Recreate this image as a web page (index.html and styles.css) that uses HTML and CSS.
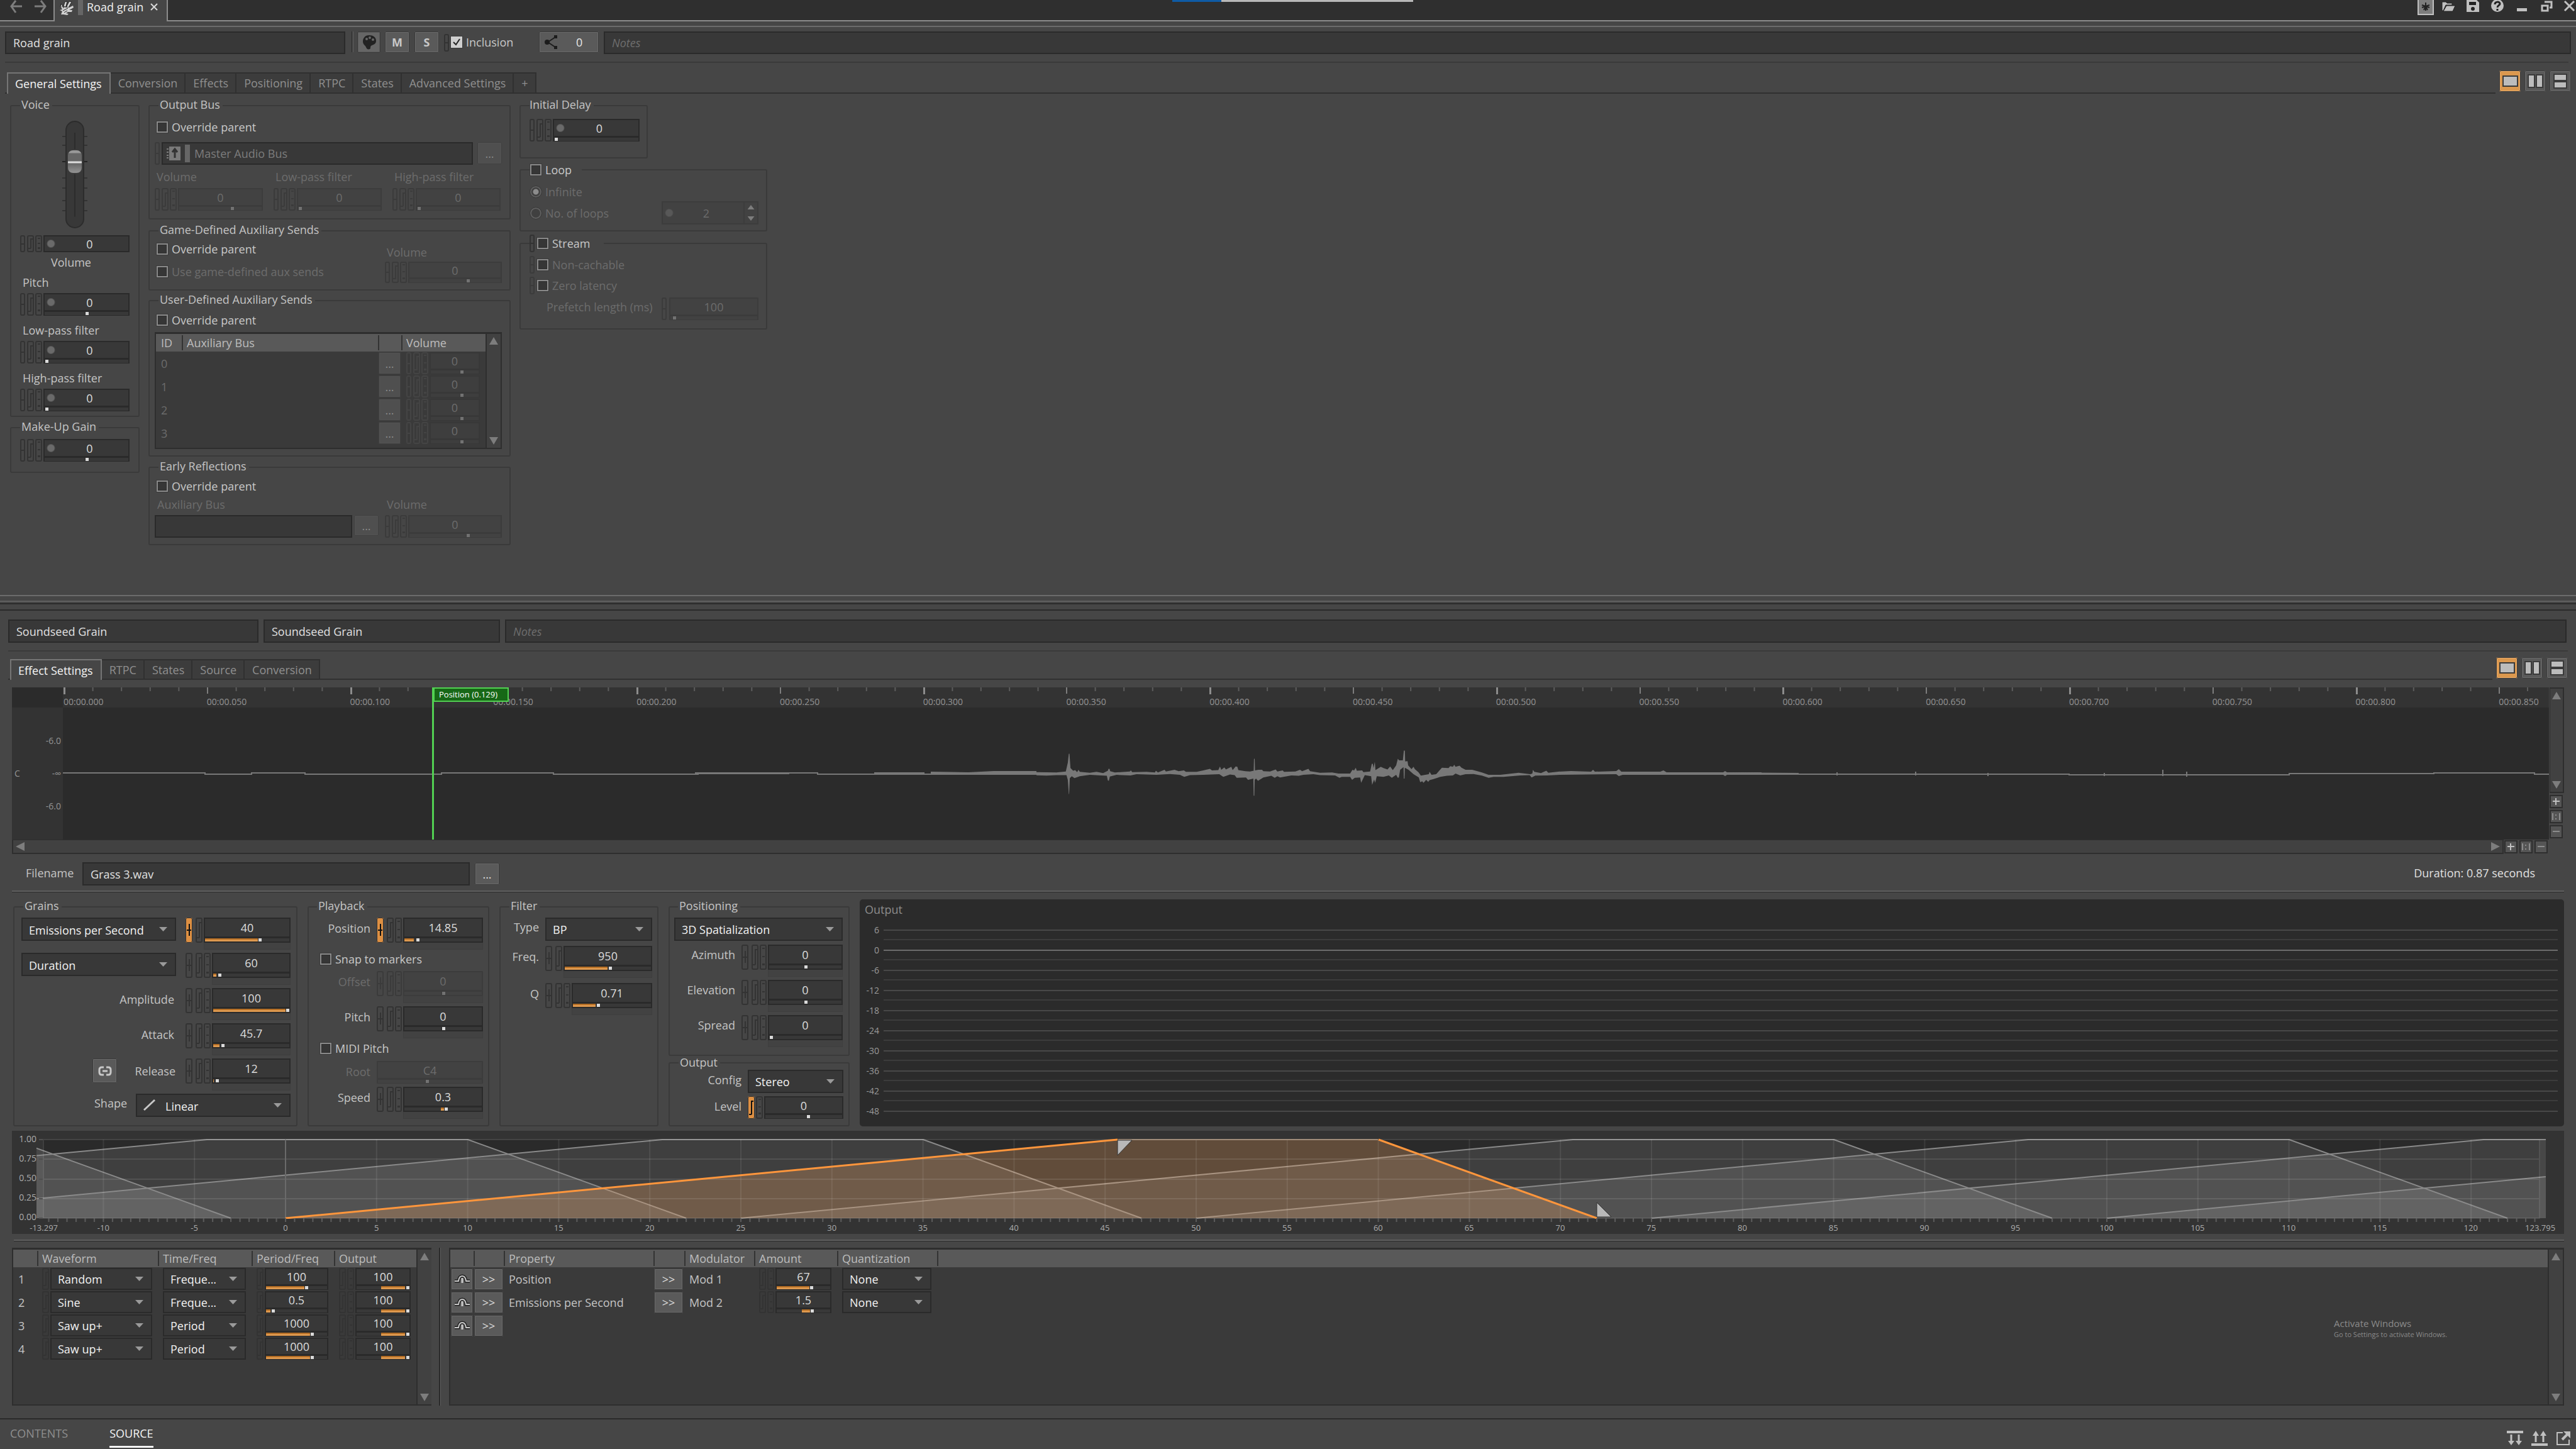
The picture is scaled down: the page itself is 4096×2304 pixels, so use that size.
FILE: index.html
```html
<!DOCTYPE html>
<html lang="en">
<head>
<meta charset="utf-8">
<title>Road grain</title>
<link rel="stylesheet" href="styles.css">
</head>
<body>
<header class="topbar">
  <nav class="history">
    <button aria-label="Back"><svg width="20" height="22" viewBox="0 0 20 22"><path d="M19 10H3M9 1L2 10l7 10" fill="none" stroke="#7d7d7d" stroke-width="3"/></svg></button>
    <button aria-label="Forward"><svg width="20" height="22" viewBox="0 0 20 22"><path d="M1 10h16M11 1l7 9-7 10" fill="none" stroke="#7d7d7d" stroke-width="3"/></svg></button>
  </nav>
  <div class="doctab">
    <svg width="26" height="24" viewBox="0 0 26 24"><path d="M3 11l1-5 3 4M8 10l2-7 4-1-2 8M13 10l4-8 4 1-5 9" fill="#d2d2d2" stroke="#222" stroke-width="1"/><path d="M4 11l13 1 6-3 1 3-7 4 5 0-1 3-6 0-3 2 4 1-2 2-6-1-4 0 2-5-4-2 4-1z" fill="#d2d2d2"/><path d="M7 17l8-4M9 20l5-3M8 10v3M13 9l-1 3" stroke="#222" stroke-width="1" fill="none"/></svg>
    <span class="colorbar"></span>
    <span class="doctitle">Road grain</span>
    <button class="tabclose" aria-label="Close tab"><svg width="14" height="14" viewBox="0 0 14 14"><path d="M2 2l10 10M12 2L2 12" stroke="#d8d8d8" stroke-width="2"/></svg></button>
  </div>
  <div class="grip"></div>
  <div class="wintools">
    <button class="star" aria-label="Unsaved changes"><svg width="22" height="22" viewBox="0 0 22 22"><path d="M11 4v13M5 8l12 4M17 8L5 12M8 16l3-6 3 6" fill="none" stroke="#222" stroke-width="2"/></svg></button>
    <button aria-label="Open"><svg width="24" height="20" viewBox="0 0 24 20"><path d="M2 17V3h6l2 2h8v3H8l-4 9zM4 18l5-9h14l-4 9z" fill="#c0c0c0" stroke="#222" stroke-width="1"/></svg></button>
    <button aria-label="Save"><svg width="24" height="20" viewBox="0 0 24 20"><path d="M2 0h16l4 4v15H2z" fill="#c0c0c0"/><path d="M6 3h11v5H6z" fill="#222"/><circle cx="12" cy="14" r="3" fill="#222"/></svg></button>
    <button aria-label="Help"><svg width="24" height="20" viewBox="0 0 24 20"><circle cx="12" cy="9" r="10" fill="#c0c0c0"/><path d="M8 7c0-5 8-5 8-1 0 3-4 2-4 6M12 14v3" fill="none" stroke="#222" stroke-width="3"/></svg></button>
    <button aria-label="Minimize"><svg width="24" height="20" viewBox="0 0 24 20"><path d="M4 13h16v5H4z" fill="#c0c0c0"/></svg></button>
    <button aria-label="Restore"><svg width="24" height="20" viewBox="0 0 24 20"><path d="M9 3h11v9h-3" fill="none" stroke="#c0c0c0" stroke-width="3"/><path d="M5 9h9v8H5z" fill="#222" stroke="#c0c0c0" stroke-width="3"/></svg></button>
    <button aria-label="Close"><svg width="20" height="20" viewBox="3 0 20 20"><path d="M5 2l15 15M20 2L5 17" stroke="#c0c0c0" stroke-width="3"/></svg></button>
  </div>
</header>

<section class="pane upper">
  <div class="headrow">
    <input class="field name" aria-label="Name" value="Road grain">
    <span class="vsplit"></span>
    <button class="btn flat" aria-label="Color"><svg width="24" height="26" viewBox="0 0 24 26"><path d="M12 2C5 2 2 7 2 12c0 5 4 6 5 9s3 4 6 3c2-1 0-3 2-5s8-2 8-8S18 2 12 2z" fill="#222"/><g fill="#666"><circle cx="8" cy="8" r="2"/><circle cx="13" cy="6" r="2"/><circle cx="18" cy="9" r="2"/></g></svg></button>
    <button class="btn ms">M</button>
    <button class="btn ms">S</button>
    <i class="mk lk short"></i>
    <label class="check incl"><input type="checkbox" checked>Inclusion</label>
    <button class="btn share"><svg width="22" height="22" viewBox="0 0 22 22"><circle cx="4" cy="11" r="4" fill="#1c1c1c"/><path d="M5 11L17 3M5 11l12 8" stroke="#1c1c1c" stroke-width="2"/><path d="M15 0h5v5h-5zM15 17h5v5h-5z" fill="#1c1c1c"/></svg><span>0</span></button>
    <input class="field notes" aria-label="Notes" placeholder="Notes">
  </div>
  <hr class="rule">
  <div class="tabbar">
    <nav class="tabs">
      <button class="on">General Settings</button><button>Conversion</button><button>Effects</button><button>Positioning</button><button>RTPC</button><button>States</button><button>Advanced Settings</button><button>+</button>
    </nav>
    <div class="views">
      <button class="on" aria-label="Single view"><span></span></button>
      <button class="v" aria-label="Split vertically"><span></span><span></span></button>
      <button class="h" aria-label="Split horizontally"><span></span><span></span></button>
    </div>
  </div>

  <div class="general">
    <div class="col voicecol">
      <fieldset class="voice"><legend>Voice</legend>
        <div class="fader"><div class="ftrack"><span></span></div><div class="thumb"></div></div>
        <div class="num flatnum"><i class="mk lk"></i><i class="mk rt"></i><i class="mk rn"></i><div class="box"><input class="ball" aria-label="Volume" value="0"></div></div>
        <span class="cap mid">Volume</span>
        <label class="cap" for="pitch">Pitch</label>
        <div class="num"><i class="mk lk"></i><i class="mk rt"></i><i class="mk rn"></i><div class="box"><input id="pitch" class="ball" value="0"><input type="range" aria-label="Pitch" value="50"></div></div>
        <label class="cap gap" for="lpf">Low-pass filter</label>
        <div class="num"><i class="mk lk"></i><i class="mk rt"></i><i class="mk rn"></i><div class="box"><input id="lpf" class="ball" value="0"><input type="range" aria-label="Low-pass filter" value="0"></div></div>
        <label class="cap gap" for="hpf">High-pass filter</label>
        <div class="num"><i class="mk lk"></i><i class="mk rt"></i><i class="mk rn"></i><div class="box"><input id="hpf" class="ball" value="0"><input type="range" aria-label="High-pass filter" value="0"></div></div>
      </fieldset>
      <fieldset class="voice makeup"><legend>Make-Up Gain</legend>
        <div class="num"><i class="mk lk"></i><i class="mk rt"></i><i class="mk rn"></i><div class="box"><input class="ball" aria-label="Make-Up Gain" value="0"><input type="range" aria-label="Make-Up Gain" value="50"></div></div>
      </fieldset>
    </div>

    <div class="col buscol">
      <fieldset class="bus"><legend>Output Bus</legend>
        <label class="check"><input type="checkbox">Override parent</label>
        <div class="busrow dis">
          <i class="mk lk"></i>
          <div class="field busfield"><svg width="22" height="26" viewBox="0 0 22 26"><path d="M0 6h3M0 11h3M0 16h3M0 20h3" stroke="#7a7a7a" stroke-width="2"/><path d="M4 2h18v22H4z" fill="#7a7a7a"/><path d="M13 20V8M9 11l4-5 4 5" fill="none" stroke="#333" stroke-width="3"/></svg><span class="colorbar"></span><span>Master Audio Bus</span></div>
          <button class="btn dots" disabled>...</button>
        </div>
        <div class="three dis">
          <div><label for="bv">Volume</label><div class="num"><i class="mk lk"></i><i class="mk rt"></i><i class="mk rn"></i><div class="box"><input id="bv" value="0"><input type="range" aria-label="Bus volume" value="65"></div></div></div>
          <div><label for="bl">Low-pass filter</label><div class="num"><i class="mk lk"></i><i class="mk rt"></i><i class="mk rn"></i><div class="box"><input id="bl" value="0"><input type="range" aria-label="Bus low-pass" value="0"></div></div></div>
          <div><label for="bh">High-pass filter</label><div class="num"><i class="mk lk"></i><i class="mk rt"></i><i class="mk rn"></i><div class="box"><input id="bh" value="0"><input type="range" aria-label="Bus high-pass" value="0"></div></div></div>
        </div>
      </fieldset>
      <fieldset class="bus game"><legend>Game-Defined Auxiliary Sends</legend>
        <div class="pair">
          <div class="stack"><label class="check"><input type="checkbox">Override parent</label><label class="check dim"><input type="checkbox">Use game-defined aux sends</label></div>
          <div class="side dis"><label for="gv">Volume</label><div class="num"><i class="mk lk"></i><i class="mk rt"></i><i class="mk rn"></i><div class="box"><input id="gv" value="0"><input type="range" aria-label="Aux send volume" value="65"></div></div></div>
        </div>
      </fieldset>
      <fieldset class="bus user"><legend>User-Defined Auxiliary Sends</legend>
        <label class="check"><input type="checkbox">Override parent</label>
        <div class="listbox">
          <table class="auxtable">
            <colgroup><col class="c-id"><col><col class="c-btn"><col class="c-vol"></colgroup>
            <thead><tr><th>ID</th><th>Auxiliary Bus</th><th></th><th>Volume</th></tr></thead>
            <tbody>
            <tr><td>0</td><td></td><td class="nb"><button class="btn dots" disabled>...</button></td><td><div class="num dis"><i class="mk lk"></i><i class="mk rt"></i><i class="mk rn"></i><div class="box"><input aria-label="Send 0" value="0"><input type="range" aria-label="Send 0" value="65"></div></div></td></tr>
            <tr><td>1</td><td></td><td class="nb"><button class="btn dots" disabled>...</button></td><td><div class="num dis"><i class="mk lk"></i><i class="mk rt"></i><i class="mk rn"></i><div class="box"><input aria-label="Send 1" value="0"><input type="range" aria-label="Send 1" value="65"></div></div></td></tr>
            <tr><td>2</td><td></td><td class="nb"><button class="btn dots" disabled>...</button></td><td><div class="num dis"><i class="mk lk"></i><i class="mk rt"></i><i class="mk rn"></i><div class="box"><input aria-label="Send 2" value="0"><input type="range" aria-label="Send 2" value="65"></div></div></td></tr>
            <tr><td>3</td><td></td><td class="nb"><button class="btn dots" disabled>...</button></td><td><div class="num dis"><i class="mk lk"></i><i class="mk rt"></i><i class="mk rn"></i><div class="box"><input aria-label="Send 3" value="0"><input type="range" aria-label="Send 3" value="65"></div></div></td></tr>
            </tbody>
          </table>
          <div class="vscroll"><span class="up"></span><span class="down"></span></div>
        </div>
      </fieldset>
      <fieldset class="bus early"><legend>Early Reflections</legend>
        <label class="check"><input type="checkbox">Override parent</label>
        <div class="pair dis">
          <div class="erbus"><label for="eb">Auxiliary Bus</label><div class="ebrow"><input id="eb" class="field"><button class="btn dots" disabled>...</button></div></div>
          <div class="side"><label for="ev">Volume</label><div class="num"><i class="mk lk"></i><i class="mk rt"></i><i class="mk rn"></i><div class="box"><input id="ev" value="0"><input type="range" aria-label="Reflection volume" value="65"></div></div></div>
        </div>
      </fieldset>
    </div>

    <div class="col delaycol">
      <fieldset class="delay"><legend>Initial Delay</legend>
        <div class="num"><i class="mk lk"></i><i class="mk rt"></i><i class="mk rn"></i><div class="box"><input class="ball" aria-label="Initial Delay" value="0"><input type="range" aria-label="Initial Delay" value="0"></div></div>
      </fieldset>
      <fieldset class="loop"><legend><label class="check"><input type="checkbox">Loop</label></legend>
        <label class="check dim"><input type="radio" name="loop" checked>Infinite</label>
        <div class="looprow"><label class="check dim"><input type="radio" name="loop">No. of loops</label>
          <div class="spin dis"><input class="ball" aria-label="Number of loops" value="2"><span class="arrows"><span class="up"></span><span class="down"></span></span></div></div>
      </fieldset>
      <fieldset class="stream"><legend><i class="mk lk short"></i><label class="check"><input type="checkbox">Stream</label></legend>
        <div class="srow"><i class="mk lk short dis"></i><label class="check dim"><input type="checkbox">Non-cachable</label></div>
        <div class="srow"><i class="mk lk short dis"></i><label class="check dim"><input type="checkbox">Zero latency</label></div>
        <div class="prefetch dis"><label for="pf">Prefetch length (ms)</label><div class="num"><i class="mk lk"></i><div class="box"><input id="pf" value="100"><input type="range" aria-label="Prefetch length" value="2"></div></div></div>
      </fieldset>
    </div>
  </div>
</section>

<div class="splitter"></div>

<section class="pane lower">
  <div class="headrow two">
    <input class="field n1" aria-label="Plug-in" value="Soundseed Grain">
    <input class="field n2" aria-label="Preset" value="Soundseed Grain">
    <input class="field notes" aria-label="Effect notes" placeholder="Notes">
  </div>
  <hr class="rule">
  <div class="tabbar">
    <nav class="tabs"><button class="on">Effect Settings</button><button>RTPC</button><button>States</button><button>Source</button><button>Conversion</button></nav>
    <div class="views">
      <button class="on" aria-label="Single view"><span></span></button>
      <button class="v" aria-label="Split vertically"><span></span><span></span></button>
      <button class="h" aria-label="Split horizontally"><span></span><span></span></button>
    </div>
  </div>

  <div class="effect">
    <div class="wave">
      <div class="wavemain">
        <div class="ruler">
          <div class="times"><span>00:00.000</span><span>00:00.050</span><span>00:00.100</span><span>00:00.150</span><span>00:00.200</span><span>00:00.250</span><span>00:00.300</span><span>00:00.350</span><span>00:00.400</span><span>00:00.450</span><span>00:00.500</span><span>00:00.550</span><span>00:00.600</span><span>00:00.650</span><span>00:00.700</span><span>00:00.750</span><span>00:00.800</span><span>00:00.850</span></div>
        </div>
        <div class="wavebody">
          <div class="levels"><b>C</b><div><span>-6.0</span><span>-∞</span><span>-6.0</span></div></div>
          <svg class="signal" viewBox="0 0 3953 210" preserveAspectRatio="none">
            <path d="M0 104H226V106H300V104H385V106H602V104H780V106H1010V104H1200V106H1548M2380 104H2700V106H3190V107H3540V105H3770V104H3930V106H3953" fill="none" stroke="#787878" stroke-width="2"/>
            <path d="M1005 103h150v3h-150zM1290 103h80v4h-80zM1380 102l60 1 40-2 68 0v6l-60 0-50-1-58 1zM2378 102L2398 101 2430 102 2433 99 2436 102 2470 101 2474 98 2478 102 2540 102 2545 100 2550 103 2640 103 2643 101 2646 103 2760 104V107L2646 107 2643 109 2640 107 2480 107 2474 109 2470 106 2378 107zM2820 103h2v5h-2zM2945 102h2v6h-2zM3060 104h2v5h-2zM3338 99h2v10h-2zM3245 104h2v5h-2zM3376 102h2v8h-2z" fill="#787878"/>
            <g transform="translate(1548 -37) scale(.5306 .2667)"><path fill="#787878" d="M0 524L60 526 88 520 94 468 97 414 99 414 102 500 110 516 116 512 122 524 126 510 130 522 160 528 180 522 200 530 214 516 216 504 219 504 221 518 235 526 280 520 283 514 287 524 330 522 355 526 358 516 364 526 384 510 388 520 414 510 426 518 442 514 448 522 480 522 500 514 520 504 526 514 545 512 550 490 554 510 563 496 568 508 584 492 588 512 597 490 602 492 605 512 626 518 640 520 651 516 652 444 654 444 655 514 665 510 676 510 680 518 700 520 717 508 722 520 738 514 742 522 776 520 790 510 796 518 815 504 820 518 850 528 886 526 905 532 940 532 947 510 952 514 957 498 960 516 976 514 980 524 1000 520 1005 474 1008 474 1010 500 1014 462 1016 512 1032 492 1040 500 1052 508 1060 490 1068 512 1078 484 1083 444 1087 454 1098 454 1101 396 1104 396 1105 460 1112 458 1114 484 1124 506 1130 492 1134 506 1145 525 1152 545 1176 536 1178 522 1184 540 1198 536 1215 498 1235 500 1240 488 1248 492 1252 480 1256 492 1268 486 1274 498 1286 510 1306 510 1335 526 1355 540 1390 540 1445 528 1480 536 1486 532 1488 510 1492 522 1512 530 1528 516 1534 528 1568 520V540L1530 544 1495 545 1484 556 1478 542 1450 544 1400 552 1370 552 1355 558 1335 545 1310 535 1286 536 1270 544 1256 532 1248 544 1230 546 1210 552 1190 565 1178 572 1174 582 1168 570 1160 588 1156 578 1150 584 1146 556 1130 536 1115 510 1104 498 1103 562 1101 562 1100 494 1090 510 1086 556 1083 558 1078 540 1065 558 1056 544 1040 552 1020 548 1015 588 1012 568 1006 600 1003 548 984 542 973 588 970 556 954 558 946 570 940 552 915 552 908 558 895 544 850 542 830 536 800 540 786 546 764 544 730 556 722 548 714 558 704 546 680 556 664 576 658 562 654 570 653 665 651 665 650 562 634 570 628 556 600 558 594 542 580 538 560 552 548 536 500 540 460 542 443 552 430 540 400 535 360 540 300 536 282 544 240 540 220 550 217 576 214 574 211 546 160 540 130 548 114 560 106 548 100 560 98 654 97 654 94 570 90 542 60 542 30 545 0 543z"/></g>
          </svg>
        </div>
        <div class="marker"><span>Position (0.129)</span></div>
        <div class="hrow">
          <div class="hscroll"><span class="left"></span><span class="right"></span></div>
          <button class="zb" aria-label="Zoom in"><svg viewBox="0 0 17 17"><path d="M3 8h11M8 3v11" stroke="#c0c0c0" stroke-width="2"/></svg></button><button class="zb" aria-label="Reset zoom"><svg viewBox="0 0 17 17"><path d="M3 3v11M14 3v11M8 5v2M8 11v2" stroke="#8c8c8c" stroke-width="2"/></svg></button><button class="zb" aria-label="Zoom out"><svg viewBox="0 0 17 17"><path d="M3 8h11" stroke="#8c8c8c" stroke-width="2"/></svg></button>
        </div>
      </div>
      <div class="wavecol">
        <div class="vscroll"><span class="up"></span><span class="down"></span></div>
        <button class="zb" aria-label="Zoom in vertically"><svg viewBox="0 0 17 17"><path d="M3 8h11M8 3v11" stroke="#c0c0c0" stroke-width="2"/></svg></button><button class="zb" aria-label="Reset vertical zoom"><svg viewBox="0 0 17 17"><path d="M3 3v11M14 3v11M8 5v2M8 11v2" stroke="#8c8c8c" stroke-width="2"/></svg></button><button class="zb" aria-label="Zoom out vertically"><svg viewBox="0 0 17 17"><path d="M3 8h11" stroke="#8c8c8c" stroke-width="2"/></svg></button>
      </div>
    </div>

    <div class="filerow"><label for="file">Filename</label><input id="file" class="field" value="Grass 3.wav"><button class="btn dots">...</button><span class="duration">Duration: 0.87 seconds</span></div>
    <hr class="groove">

    <div class="groups">
      <fieldset class="grains"><legend>Grains</legend>
        <div class="prow"><select aria-label="Emission mode"><option>Emissions per Second</option></select><div class="num big"><i class="mk lfo hot"></i><i class="mk rt"></i><div class="box"><input aria-label="Emissions" value="40"><input type="range" aria-label="Emissions" value="66" style="--b:63%"></div></div></div>
        <div class="prow"><select aria-label="Length mode"><option>Duration</option></select><div class="num big"><i class="mk lfo"></i><i class="mk rt"></i><i class="mk rn"></i><div class="box"><input aria-label="Duration" value="60"><input type="range" aria-label="Duration" value="6" style="--b:4%"></div></div></div>
        <div class="prow"><label for="amp">Amplitude</label><div class="num big"><i class="mk lfo"></i><i class="mk rt"></i><i class="mk rn"></i><div class="box"><input id="amp" value="100"><input type="range" aria-label="Amplitude" value="100" style="--b:95%"></div></div></div>
        <div class="prow"><label for="att">Attack</label><div class="num big"><i class="mk lfo"></i><i class="mk rt"></i><i class="mk rn"></i><div class="box"><input id="att" value="45.7"><input type="range" aria-label="Attack" value="10" style="--b:8%"></div></div></div>
        <div class="prow rel"><button class="btn linkbtn" aria-label="Link attack and release"><svg width="22" height="16" viewBox="0 0 22 16"><path d="M9 2H6Q2 2 2 6v4q0 4 4 4h3M13 2h3q4 0 4 4v4q0 4-4 4h-3M7 8h8" fill="none" stroke="#c8c8c8" stroke-width="3"/></svg></button><label for="rls">Release</label><div class="num big"><i class="mk lfo"></i><i class="mk rt"></i><i class="mk rn"></i><div class="box"><input id="rls" value="12"><input type="range" aria-label="Release" value="3" style="--b:1%"></div></div></div>
        <div class="prow shape"><label for="shp">Shape</label><span class="selwrap"><svg width="20" height="20" viewBox="0 0 20 20"><path d="M1 18L18 2" stroke="#c8c8c8" stroke-width="3"/></svg><select id="shp"><option>Linear</option></select></span></div>
      </fieldset>
      <fieldset class="playback"><legend>Playback</legend>
        <div class="prow"><label for="pos">Position</label><div class="num big"><i class="mk lfo hot"></i><i class="mk rt"></i><i class="mk rn"></i><div class="box"><input id="pos" value="14.85"><input type="range" aria-label="Position" value="15" style="--b:12%"></div></div></div>
        <label class="check"><input type="checkbox">Snap to markers</label>
        <div class="prow gap dis"><label for="off">Offset</label><div class="num big"><i class="mk lfo"></i><i class="mk rt"></i><i class="mk rn"></i><div class="box"><input id="off" value="0"><input type="range" aria-label="Offset" value="50"></div></div></div>
        <div class="prow"><label for="pp">Pitch</label><div class="num big"><i class="mk lfo"></i><i class="mk rt"></i><i class="mk rn"></i><div class="box"><input id="pp" value="0"><input type="range" aria-label="Pitch" value="50"></div></div></div>
        <label class="check"><input type="checkbox">MIDI Pitch</label>
        <div class="prow gap root dis"><label for="root">Root</label><div class="num"><div class="box"><input id="root" value="C4"><input type="range" aria-label="Root" value="47"></div></div></div>
        <div class="prow speed"><label for="spd">Speed</label><div class="num big"><i class="mk lfo"></i><i class="mk rt"></i><i class="mk rn"></i><div class="box"><input id="spd" value="0.3"><input type="range" aria-label="Speed" value="54" style="--a:47%;--b:52%"></div></div></div>
      </fieldset>
      <fieldset class="filter"><legend>Filter</legend>
        <div class="prow type"><label for="ft">Type</label><select id="ft"><option>BP</option></select></div>
        <div class="prow freq"><label for="fq">Freq.</label><div class="num big"><i class="mk lfo"></i><i class="mk rt"></i><div class="box"><input id="fq" value="950"><input type="range" aria-label="Frequency" value="53" style="--b:50%"></div></div></div>
        <div class="prow"><label for="q">Q</label><div class="num big"><i class="mk lfo"></i><i class="mk rt"></i><i class="mk rn"></i><div class="box"><input id="q" value="0.71"><input type="range" aria-label="Q" value="31" style="--b:29%"></div></div></div>
      </fieldset>
      <div class="col poscol">
        <fieldset class="position"><legend>Positioning</legend>
          <div class="prow spat"><select aria-label="Positioning"><option>3D Spatialization</option></select></div>
          <div class="prow"><label for="az">Azimuth</label><div class="num big"><i class="mk lfo"></i><i class="mk rt"></i><i class="mk rn"></i><div class="box"><input id="az" value="0"><input type="range" aria-label="Azimuth" value="50"></div></div></div>
          <div class="prow"><label for="el">Elevation</label><div class="num big"><i class="mk lfo"></i><i class="mk rt"></i><i class="mk rn"></i><div class="box"><input id="el" value="0"><input type="range" aria-label="Elevation" value="50"></div></div></div>
          <div class="prow"><label for="sp">Spread</label><div class="num big"><i class="mk lfo"></i><i class="mk rt"></i><i class="mk rn"></i><div class="box"><input id="sp" value="0"><input type="range" aria-label="Spread" value="0"></div></div></div>
        </fieldset>
        <fieldset class="output"><legend>Output</legend>
          <div class="prow config"><label for="cfg">Config</label><select id="cfg"><option>Stereo</option></select></div>
          <div class="prow level"><label for="lvl">Level</label><div class="num"><i class="mk rt hot"></i><i class="mk rn"></i><div class="box"><input id="lvl" value="0"><input type="range" aria-label="Level" value="56"></div></div></div>
        </fieldset>
      </div>
      <div class="meter"><h2>Output</h2>
        <div class="mrow"><span>6</span></div><div class="mrow zero"><span>0</span></div><div class="mrow"><span>-6</span></div><div class="mrow"><span>-12</span></div><div class="mrow"><span>-18</span></div><div class="mrow"><span>-24</span></div><div class="mrow"><span>-30</span></div><div class="mrow"><span>-36</span></div><div class="mrow"><span>-42</span></div><div class="mrow last"><span>-48</span></div>
      </div>
    </div>

    <div class="graph">
      <div class="gy"><span>1.00</span><span>0.75</span><span>0.50</span><span>0.25</span><span>0.00</span></div>
      <svg viewBox="39 0 3990 146" preserveAspectRatio="none">
        <defs>
          <path id="grain" d="M0 139L1323 14H1738L2085 139z"/>
          <path id="edge" d="M0 139L1323 14H1738L2085 139"/>
          <clipPath id="plot"><path d="M39 12h3990v128H39z"/></clipPath>
          <pattern id="minor" width="14.48" height="7" patternUnits="userSpaceOnUse" x="434" y="139"><path d="M0 0h2v7H0z" fill="#5c5c5c"/></pattern>
          <pattern id="major" width="144.8" height="125" patternUnits="userSpaceOnUse" x="434" y="14"><path d="M0 0h2v125H0z" fill="#fff" fill-opacity=".08"/></pattern>
        </defs>
        <path d="M49 14H4020V139H49z" fill="#2a2a2a"/>
        <g clip-path="url(#plot)">
          <g fill="#fff" fill-opacity=".1"><use href="#grain" x="-1737"/><use href="#grain" x="-1013"/><use href="#grain" x="-289"/><use href="#grain" x="1159"/><use href="#grain" x="1883"/><use href="#grain" x="2607"/><use href="#grain" x="3331"/></g>
          <g fill="none" stroke="#8a8a8a" stroke-width="2"><use href="#edge" x="-1737"/><use href="#edge" x="-1013"/><use href="#edge" x="-289"/><use href="#edge" x="1159"/><use href="#edge" x="1883"/><use href="#edge" x="2607"/><use href="#edge" x="3331"/></g>
          <use href="#grain" x="435" fill="#ffae6a" fill-opacity=".26"/>
          <path d="M49 14H4020V139H49z" fill="url(#major)"/>
          <path d="M49 14H4020M49 45H4020M49 77H4020M49 108H4020M49 139H4020M50 14V139M4019 14V139" stroke="#fff" stroke-opacity=".1" stroke-width="2"/>
          <path d="M435 14V139" stroke="#6a6a6a" stroke-width="2"/>
          <path d="M1759 14H2172" stroke="#a08c7a" stroke-width="2"/>
          <path d="M435 139L1758 14M2173 14L2520 139" fill="none" stroke="#ff963c" stroke-width="3"/>
          <path d="M1758 15h23l-23 24zM2520 114v23h23z" fill="#b8b8b8" stroke="#333"/>
        </g>
        <path d="M49 139H4020v6H49z" fill="url(#minor)"/>
        <path d="M43 14h6M43 45h6M43 77h6M43 108h6M43 139h6" stroke="#505050" stroke-width="2"/>
      </svg>
      <div class="gx"><span class="first">-13.297</span><span>-10</span><span>-5</span><span>0</span><span>5</span><span>10</span><span>15</span><span>20</span><span>25</span><span>30</span><span>35</span><span>40</span><span>45</span><span>50</span><span>55</span><span>60</span><span>65</span><span>70</span><span>75</span><span>80</span><span>85</span><span>90</span><span>95</span><span>100</span><span>105</span><span>110</span><span>115</span><span>120</span><span class="lastx">123.795</span></div>
    </div>
    <hr class="groove">

    <div class="tables">
      <div class="listbox modbox">
        <table class="mods">
          <colgroup><col class="m1"><col class="m2"><col class="m3"><col class="m4"><col class="m5"></colgroup>
          <thead><tr><th></th><th>Waveform</th><th>Time/Freq</th><th>Period/Freq</th><th>Output</th></tr></thead>
          <tbody>
          <tr><td>1</td><td><div class="wf"><i class="mk rt"></i><select aria-label="Waveform 1"><option>Random</option></select></div></td><td><select aria-label="Time mode 1"><option>Freque...</option></select></td><td><div class="num"><i class="mk rt"></i><div class="box"><input aria-label="Period 1" value="100"><input type="range" aria-label="Period 1" value="67" style="--b:64%"></div></div></td><td><div class="num"><i class="mk rt"></i><i class="mk rn"></i><div class="box"><input aria-label="Output 1" value="100"><input type="range" aria-label="Output 1" value="100" style="--a:46%;--b:92%"></div></div></td></tr>
          <tr><td>2</td><td><div class="wf"><i class="mk rt"></i><select aria-label="Waveform 2"><option>Sine</option></select></div></td><td><select aria-label="Time mode 2"><option>Freque...</option></select></td><td><div class="num"><i class="mk rt"></i><div class="box"><input aria-label="Period 2" value="0.5"><input type="range" aria-label="Period 2" value="9" style="--b:7%"></div></div></td><td><div class="num"><i class="mk rt"></i><i class="mk rn"></i><div class="box"><input aria-label="Output 2" value="100"><input type="range" aria-label="Output 2" value="100" style="--a:46%;--b:92%"></div></div></td></tr>
          <tr><td>3</td><td><div class="wf"><i class="mk rt"></i><select aria-label="Waveform 3"><option>Saw up+</option></select></div></td><td><select aria-label="Time mode 3"><option>Period</option></select></td><td><div class="num"><i class="mk rt"></i><div class="box"><input aria-label="Period 3" value="1000"><input type="range" aria-label="Period 3" value="77" style="--b:73%"></div></div></td><td><div class="num"><i class="mk rt"></i><i class="mk rn"></i><div class="box"><input aria-label="Output 3" value="100"><input type="range" aria-label="Output 3" value="100" style="--a:46%;--b:92%"></div></div></td></tr>
          <tr><td>4</td><td><div class="wf"><i class="mk rt"></i><select aria-label="Waveform 4"><option>Saw up+</option></select></div></td><td><select aria-label="Time mode 4"><option>Period</option></select></td><td><div class="num"><i class="mk rt"></i><div class="box"><input aria-label="Period 4" value="1000"><input type="range" aria-label="Period 4" value="77" style="--b:73%"></div></div></td><td><div class="num"><i class="mk rt"></i><i class="mk rn"></i><div class="box"><input aria-label="Output 4" value="100"><input type="range" aria-label="Output 4" value="100" style="--a:46%;--b:92%"></div></div></td></tr>
          </tbody>
        </table>
        <div class="vscroll"><span class="up"></span><span class="down"></span></div>
      </div>
      <span class="vgroove"></span>
      <div class="listbox propbox">
        <table class="props">
          <colgroup><col class="p1"><col class="p2"><col class="p3"><col class="p4"><col class="p5"><col class="p6"><col class="p7"><col></colgroup>
          <thead><tr><th></th><th></th><th>Property</th><th></th><th>Modulator</th><th>Amount</th><th>Quantization</th><th></th></tr></thead>
          <tbody>
          <tr><td class="nb"><button class="btn curve" aria-label="Curve"><svg width="26" height="16" viewBox="0 0 26 16"><path d="M1 11h6q1-8 6-8t6 8h6" fill="none" stroke="#222" stroke-width="5"/><path d="M1 11h6q1-8 6-8t6 8h6" fill="none" stroke="#c8c8c8" stroke-width="2"/><path d="M13 6v8" stroke="#c8c8c8" stroke-width="3"/></svg></button></td><td class="nb"><button class="btn more">&gt;&gt;</button></td><td>Position</td><td class="nb"><button class="btn more">&gt;&gt;</button></td><td>Mod 1</td><td><div class="num"><i class="mk rt"></i><i class="mk rn"></i><div class="box"><input aria-label="Amount 1" value="67"><input type="range" aria-label="Amount 1" value="66" style="--b:62%"></div></div></td><td><select aria-label="Quantization 1"><option>None</option></select></td><td></td></tr>
          <tr><td class="nb"><button class="btn curve" aria-label="Curve"><svg width="26" height="16" viewBox="0 0 26 16"><path d="M1 11h6q1-8 6-8t6 8h6" fill="none" stroke="#222" stroke-width="5"/><path d="M1 11h6q1-8 6-8t6 8h6" fill="none" stroke="#c8c8c8" stroke-width="2"/><path d="M13 6v8" stroke="#c8c8c8" stroke-width="3"/></svg></button></td><td class="nb"><button class="btn more">&gt;&gt;</button></td><td>Emissions per Second</td><td class="nb"><button class="btn more">&gt;&gt;</button></td><td>Mod 2</td><td><div class="num"><i class="mk rt"></i><i class="mk rn"></i><div class="box"><input aria-label="Amount 2" value="1.5"><input type="range" aria-label="Amount 2" value="67" style="--a:47%;--b:63%"></div></div></td><td><select aria-label="Quantization 2"><option>None</option></select></td><td></td></tr>
          <tr><td class="nb"><button class="btn curve" aria-label="Curve"><svg width="26" height="16" viewBox="0 0 26 16"><path d="M1 11h6q1-8 6-8t6 8h6" fill="none" stroke="#222" stroke-width="5"/><path d="M1 11h6q1-8 6-8t6 8h6" fill="none" stroke="#c8c8c8" stroke-width="2"/><path d="M13 6v8" stroke="#c8c8c8" stroke-width="3"/></svg></button></td><td class="nb"><button class="btn more">&gt;&gt;</button></td><td></td><td></td><td></td><td></td><td></td><td></td></tr>
          </tbody>
        </table>
        <div class="vscroll"><span class="up"></span><span class="down"></span></div>
        <div class="activate"><p>Activate Windows</p><small>Go to Settings to activate Windows.</small></div>
      </div>
    </div>
  </div>
</section>

<footer class="bottombar">
  <a href="#contents">CONTENTS</a><a href="#source" class="on">SOURCE</a>
  <div class="foottools">
    <button aria-label="Collapse"><svg width="28" height="26" viewBox="0 0 28 26"><path d="M1 3h26" stroke="#c0c0c0" stroke-width="4"/><path d="M8 7v14M20 7v14" stroke="#c0c0c0" stroke-width="3"/><path d="M3 17h10l-5 7zM15 17h10l-5 7z" fill="#c0c0c0"/></svg></button>
    <button aria-label="Expand"><svg width="28" height="26" viewBox="0 0 28 26"><path d="M1 23h26" stroke="#c0c0c0" stroke-width="4"/><path d="M8 5v14M20 5v14" stroke="#c0c0c0" stroke-width="3"/><path d="M3 9h10L8 1zM15 9h10l-5-8z" fill="#c0c0c0"/></svg></button>
    <button aria-label="Pop out"><svg width="28" height="26" viewBox="0 0 28 26"><path d="M12 4H3v19h19v-8" fill="none" stroke="#c0c0c0" stroke-width="2"/><path d="M11 15L20 6" stroke="#c0c0c0" stroke-width="4"/><path d="M13 2h11v11z" fill="#c0c0c0"/></svg></button>
  </div>
</footer>
</body>
</html>
```
FILE: styles.css
```css
* { box-sizing: border-box; }
:root {
  --bg: #464646;
  --well: #383838;
  --edge: #2a2a2a;
  --group: #3a3a3a;
  --text: #c4c4c4;
  --mark: #333;
}
body {
  margin: 0;
  min-height: 100vh;
  display: flex;
  flex-direction: column;
  background: var(--bg);
  color: var(--text);
  font: 18px/24px "Open Sans", "Noto Sans", sans-serif;
}
input, button, select { font: inherit; color: inherit; margin: 0; border-radius: 0; }
button { background: none; border: 0; padding: 0; }
svg { display: block; }
label { display: block; }

/* window bar */
.topbar { display: flex; height: 34px; background: linear-gradient(#2f2f2f 32px, #8c8c8c 32px); }
.history { display: flex; gap: 18px; width: 85px; padding-left: 16px; }
.history button, .wintools button { align-self: flex-start; }
.doctab { display: flex; width: 182px; padding-left: 6px; background: var(--bg); border: solid #8c8c8c; border-width: 0 2px; }
.colorbar { width: 8px; height: 24px; margin: 0 6px 0 5px; background: #666; }
.doctitle { color: #f0f0f0; line-height: 22px; }
.tabclose { margin: 4px 0 0 10px; height: 14px; }
.grip { width: 383px; height: 3px; margin: 0 auto; background: linear-gradient(90deg, #0f5ba5 78px, #b8b8b8 78px); }
.wintools { display: flex; gap: 15px; height: 24px; }
.wintools .star { width: 26px; height: 24px; margin-right: -4px; background: #7d7d7d; border: solid #c0c0c0; border-width: 0 2px 2px; }

.pane { display: flex; flex-direction: column; }
.upper { min-height: 912px; border-top: 2px solid var(--bg); padding-top: 14px; background: linear-gradient(#6c6c6c, #6c6c6c) 0 5px / 100% 2px no-repeat; }
.headrow { display: flex; align-items: flex-start; padding: 0 8px; height: 36px; }
.field { height: 36px; background: var(--well); border: 2px solid var(--edge); padding: 0 11px; color: #e0e0e0; outline: 0; }
.field::placeholder { color: #6e6e6e; font-style: italic; opacity: 1; }
.name { width: 541px; }
.vsplit { width: 3px; height: 33px; margin: 0 6px 0 10px; border-left: 1px solid #2a2a2a; border-right: 1px solid #606060; }
.notes { flex: 1; margin-left: 8px; }
.btn { display: flex; align-items: center; justify-content: center; background: #5a5a5a; border: 2px solid #6a6a6a; outline: 1px solid #3a3a3a; outline-offset: -1px; border-radius: 2px; height: 34px; }
.btn.flat { width: 37px; background: #666; border-color: #5a5a5a; margin-right: 7px; }
.btn.ms { width: 39px; margin-right: 8px; font-weight: 700; color: #c8c8c8; }
.incl { margin-top: 5px; width: 140px; }
.headrow .mk { margin-top: 4px; }
.btn.share { width: 95px; justify-content: flex-start; padding-left: 7px; gap: 28px; color: #e8e8e8; }
.rule { width: calc(100% - 20px); height: 2px; margin: 12px 8px 0; border: 0; background: #3a3a3a; }

.tabbar { display: flex; margin-left: 8px; padding-top: 15px; }
.tabs { flex: 1; display: flex; height: 34px; padding-left: 3px; background: linear-gradient(#303030, #303030) 0 100% / 100% 2px no-repeat; }
.tabs button { padding: 0 11px 0 12px; height: 34px; background: #3c3c3c; border: solid #303030; border-width: 2px 2px 2px 0; color: #8f8f8f; }
.tabs .on { background: var(--bg); color: #f4f4f4; border: solid #757575; border-width: 2px 2px 0; padding: 0 12px 0 11px; }
.views { display: flex; gap: 6px; padding: 0 8px 0 6px; margin-top: -3px; }
.views button { width: 34px; height: 34px; display: flex; align-items: center; justify-content: center; gap: 3px; background: #5a5a5a; border: 2px solid #6a6a6a; outline: 1px solid #3a3a3a; outline-offset: -1px; border-radius: 3px; }
.views .on { background: #db984e; border-color: #e8aa68; }
.views span { background: #bcbcbc; outline: 2px solid #3a3a3a; width: 21px; height: 14px; }
.views .v span { width: 8px; height: 18px; }
.views .v { gap: 5px; }
.views .h { flex-direction: column; gap: 4px; }
.views .h span { width: 18px; height: 8px; }

/* group boxes */
fieldset { margin: 0; padding: 0; min-width: 0; border: 2px solid var(--group); border-radius: 3px; }
legend { height: 24px; line-height: 20px; margin-left: 14px; padding: 0 4px 0 2px; white-space: nowrap; }
.general { display: flex; padding: 7px 0 0 16px; }
.col { display: flex; flex-direction: column; }
.voicecol { width: 206px; gap: 5px; margin-right: 14px; }
.buscol { width: 576px; margin-right: 14px; }
.delaycol { width: 394px; }

/* property editors: markers, value box and slider */
.num { display: flex; height: 36px; }
.mk { flex: none; width: 11px; margin-right: 2px; border: 2px solid var(--mark); border-radius: 3px; background-repeat: no-repeat; }
.mk.lk { width: 8px; margin-right: 3px; background-image: linear-gradient(var(--mark), var(--mark)); background-size: 100% 2px; background-position: 0 50%; }
.mk.rt { background-image: linear-gradient(var(--mark), var(--mark)), linear-gradient(var(--mark), var(--mark)), linear-gradient(var(--mark), var(--mark)); background-size: 2px 70%, 4px 2px, 4px 2px; background-position: 50% 50%, 100% 15%, 0 85%; }
.mk.rn { background-image: linear-gradient(var(--mark), var(--mark)), linear-gradient(var(--mark), var(--mark)), linear-gradient(var(--mark), var(--mark)); background-size: 4px 2px, 4px 2px, 4px 3px; background-position: 50% 8%, 50% 48%, 50% 84%; }
.mk.lfo { background-image: linear-gradient(var(--mark), var(--mark)), linear-gradient(var(--mark), var(--mark)); background-size: 2px 54%, 100% 2px; background-position: 50% 50%, 0 50%; }
.mk.short { height: 28px; }
.mk.hot { --mark: #111; background-color: #dd8f42; border-color: #dd8f42; outline: 1px solid #333; outline-offset: -1px; }
.box { flex: 1; min-width: 0; display: flex; flex-direction: column; background: var(--well); border: solid var(--edge); border-width: 2px 2px 1px; }
.box input:not([type=range]), .spin input { flex: 1; width: 100%; min-height: 0; min-width: 0; padding: 0; border: 0; background: none; text-align: center; color: #dcdcdc; outline: 0; }
.box .ball, .spin .ball { padding-left: 10px !important; background: radial-gradient(circle at 10px 50%, var(--ball, #6a6a6a) 5px, transparent 7px) !important; }
input[type=range] { --a: 0%; --b: 0%; appearance: none; flex: none; width: 100%; height: 8px; padding: 0; border-top: 3px solid var(--edge); background: linear-gradient(90deg, transparent var(--a), #b56e24 var(--a) var(--b), transparent var(--b)) 0 0 / 100% 2px no-repeat, linear-gradient(90deg, transparent var(--a), #dd984e var(--a) var(--b), transparent var(--b)); }
input[type=range]::-webkit-slider-thumb { appearance: none; width: 6px; height: 5px; background: #dadada; border-left: 1px solid var(--edge); }
.dis { --well: #424242; --edge: #3c3c3c; --mark: #3b3b3b; --ball: #585858; color: #6c6c6c; }
.dis input:not([type=range]) { color: #6c6c6c; }
.dis input[type=range]::-webkit-slider-thumb { background: #727272; }
.dis .field { background: #383838; border-color: #2a2a2a; color: #7c7c7c; }

/* tick boxes and radios */
.check { display: flex; align-items: center; height: 24px; line-height: 22px; color: #c8c8c8; white-space: nowrap; }
.check input { appearance: none; flex: none; width: 18px; height: 18px; margin-right: 6px; background: #363636; border: 2px solid #8a8a8a; outline: 1px solid #3a3a3a; box-shadow: inset 0 0 0 1px #2e2e2e; }
.check input:checked { background: #cfcfcf url("data:image/svg+xml,%3Csvg xmlns='http://www.w3.org/2000/svg' viewBox='0 0 14 14'%3E%3Cpath d='M2 7l4 4 6-9' fill='none' stroke='%23222' stroke-width='2'/%3E%3C/svg%3E"); box-shadow: none; border-color: #cfcfcf; }
.check input[type=radio] { border-radius: 9px; border-color: #606060; background: #404040; box-shadow: none; }
.check input[type=radio]:checked { background: radial-gradient(#8c8c8c 4px, #404040 5px); }
.check.dim { color: #6c6c6c; }

/* voice */
.voice { padding: 0 14px 7px; }
.voice legend { margin-left: 0; }
.fader { display: grid; justify-items: center; height: 171px; margin: 12px 0 11px; }
.fader > * { grid-area: 1 / 1; }
.ftrack { width: 40px; display: flex; justify-content: center; background: linear-gradient(#333, #333) 0 24px / 100% 2px no-repeat, linear-gradient(#333, #333) 0 38px / 100% 2px no-repeat, linear-gradient(#222, #222) 0 64px / 100% 2px no-repeat, linear-gradient(#333, #333) 0 90px / 100% 2px no-repeat, linear-gradient(#333, #333) 0 106px / 100% 2px no-repeat, linear-gradient(#333, #333) 0 126px / 100% 2px no-repeat, linear-gradient(#333, #333) 0 142px / 100% 2px no-repeat; }
.ftrack span { width: 30px; background: linear-gradient(#2c2c2c, #2c2c2c) 50% 50% / 2px 80% no-repeat #383838; border: 2px solid #2c2c2c; border-radius: 15px; }
.thumb { width: 26px; height: 40px; margin-top: 45px; border: 2px solid #3a3a3a; border-radius: 10px; background: linear-gradient(#999 0 4px, #666 5px, #666 17px, #ddd 18px 20px, #666 21px, #8e8e8e 34px); }
.flatnum { height: 27px; }
.flatnum .box { border-bottom-width: 2px; }
.cap { margin: 8px 0 5px 4px; }
.cap.mid { display: block; margin: 4px 12px 0 0; text-align: center; }
.cap.gap { margin-top: 11px; }
.makeup { padding-bottom: 16px; }
.makeup .num { margin-top: 6px; }

/* buses */
.bus { padding: 0 12px 12px 8px; }
.bus legend { margin-left: 6px; }
.bus > .check { margin: 10px 0 0 3px; }
.busrow { display: flex; margin-top: 12px; }
.busfield { flex: 1; display: flex; align-items: center; padding-left: 6px; }
.busfield .colorbar { height: 28px; margin: 0 7px; }
.dots { width: 39px; height: 35px; margin-left: 7px; color: #e0e0e0; }
.dots:disabled { background: #4f4f4f; border-color: #525252; color: #8a8a8a; outline-color: #404040; }
.three { display: grid; grid-template-columns: 172px 172px 172px; gap: 17px; margin: 7px 0 0; }
.three label { margin: 0 0 6px 3px; }
.game { margin-top: 6px; padding-bottom: 10px; }
.pair { display: flex; justify-content: space-between; }
.stack { display: grid; gap: 12px; padding: 5px 0 0 3px; align-content: start; }
.side { width: 186px; }
.side label { padding-left: 3px; }
.game .side { padding-top: 10px; }
.game .num { margin-top: 3px; height: 34px; }
.user { margin-top: 4px; padding: 0 12px 10px 8px; }
.bus.user > .check { margin-top: 7px; }
.user .listbox { margin-top: 7px; height: 186px; }
.early { margin-top: 5px; padding-bottom: 10px; }
.bus.early > .check { margin-top: 6px; }
.early .pair { padding-top: 5px; }
.early .pair label { margin-bottom: 5px; }
.erbus label { padding-left: 4px; }
.ebrow { display: flex; }
.ebrow .field { width: 314px; }
.ebrow .dots { margin-left: 3px; height: 33px; }

.listbox { display: flex; background: #3a3a3a; border: 2px solid #2e2e2e; border-top-width: 3px; }
table { flex: 1; width: 100%; height: max-content; border-collapse: collapse; table-layout: fixed; }
th { height: 28px; padding: 0 6px 0 8px; text-align: left; font-weight: 400; line-height: 20px; background: #595959; color: #bdbdbd; white-space: nowrap; }
th + th { background: linear-gradient(#333, #333) 0 50% / 2px 86% no-repeat #595959; }
td { height: 37px; padding: 1px 9px 1px 8px; }
td.nb { padding: 1px 1px; }
td .num, td select, .wf { height: 35px; }
.auxtable td { color: #6c6c6c; }
.auxtable .num { --well: #3e3e3e; --edge: #383838; --mark: #444; }
.c-id { width: 41px; }
.c-btn { width: 37px; }
.c-vol { width: 134px; }
td .dots { width: 35px; margin: 0; }
.vscroll { flex: none; width: 24px; display: flex; flex-direction: column; justify-content: space-between; align-items: center; padding: 5px 0; background: #414141; border-left: 2px solid #2e2e2e; }
.up, .down { width: 14px; height: 12px; background: #7d7d7d; clip-path: polygon(50% 0, 100% 100%, 0 100%); }
.down { clip-path: polygon(0 0, 100% 0, 50% 100%); }

/* delay, loop and stream */
.delay { width: 204px; padding: 0 11px 25px 14px; }
.delay legend, .loop legend, .stream legend { margin-left: 0; padding-left: 0; }
.delay .num { margin-top: 9px; }
.loop { margin-top: 6px; padding: 0 12px 9px 15px; }
.loop legend { padding-right: 16px; }
.loop > .check { margin-top: 11px; }
.looprow { display: flex; justify-content: space-between; align-items: center; margin-top: 3px; }
.spin { display: flex; width: 154px; height: 37px; background: var(--well); border: 2px solid var(--edge); }
.arrows { flex: none; width: 22px; display: flex; flex-direction: column; justify-content: space-between; align-items: center; padding: 4px 0; border-left: 2px solid var(--edge); }
.arrows span { width: 11px; height: 7px; }
.stream { margin-top: 7px; padding: 0 12px 13px 14px; }
.stream legend { display: flex; align-items: center; padding-right: 22px; }
.stream .mk { margin-right: 4px; }
.srow { display: flex; align-items: center; height: 28px; margin-top: 5px; }
.stream legend + .srow { margin-top: 8px; }
.prefetch { display: flex; justify-content: space-between; padding-left: 27px; margin-top: 5px; white-space: nowrap; }
.prefetch label { line-height: 30px; }
.prefetch .num { width: 154px; }

.splitter { height: 25px; background: linear-gradient(#6c6c6c 2px, var(--bg) 2px 9px, #5c5c5c 9px 12px, #2f2f2f 12px 15px, var(--bg) 15px 23px, #2a2a2a 23px); }

/* effect editor */
.lower { flex: 1; padding: 14px 0 20px; }
.two { padding: 0 15px 0 13px; height: 37px; }
.two .field { height: 37px; }
.n1 { width: 398px; margin-right: 8px; }
.n2 { width: 376px; }
.lower .rule { margin: 12px 13px 0; width: calc(100% - 26px); }
.lower .tabbar { margin-left: 13px; padding-top: 12px; }
.lower .views { padding-right: 13px; margin-top: -3px; }
.lower .tabs, .lower .tabs button { height: 33px; }
.lower .tabbar { height: 45px; }
.effect { flex: 1; display: flex; flex-direction: column; padding: 12px 19px 0; }
.wave { display: flex; height: 265px; }
.wavemain { flex: 1; display: flex; flex-direction: column; position: relative; }
.ruler { height: 32px; padding-left: 82px; background: linear-gradient(90deg, #2b2b2b 81px, #333 81px); }
.times { display: flex; height: 32px; font-size: 14px; line-height: 20px; color: #949494; }
.times span { flex: 1 1 0; min-width: 0; padding-top: 13px; white-space: nowrap; background: linear-gradient(#7d7d7d, #7d7d7d) 0 0 / 2px 10px no-repeat, linear-gradient(90deg, #5c5c5c 2px, transparent 2px) 0 0 / 20% 6px repeat-x; }
.times span:nth-child(odd) { background: linear-gradient(#8c8c8c, #8c8c8c) 0 0 / 3px 11px no-repeat, linear-gradient(90deg, #5c5c5c 2px, transparent 2px) 0 0 / 20% 6px repeat-x; }
.times span:last-child { flex: .35 1 0; background: linear-gradient(#7d7d7d, #7d7d7d) 0 0 / 2px 10px no-repeat, linear-gradient(90deg, #5c5c5c 2px, transparent 2px) 45px 0 / 100px 6px repeat-x; }
.wavebody { flex: 1; display: flex; background: #2b2b2b; min-height: 0; }
.levels { width: 81px; display: flex; justify-content: space-between; align-items: center; padding: 0 3px 0 4px; background: #333; font-size: 14px; line-height: 20px; color: #949494; }
.levels b { font-weight: 400; }
.levels div { display: flex; flex-direction: column; gap: 32px; text-align: right; }
.signal { flex: 1; min-width: 0; height: 210px; }
.marker { position: absolute; left: 668px; top: 0; height: 242px; border-left: 3px solid #52d052; }
.marker span { display: block; height: 23px; margin-left: -1px; padding: 0 16px 0 7px; background: #176817; border: 2px solid #52d052; color: #fff; font-size: 13px; line-height: 18px; }
.hrow { display: flex; gap: 3px; height: 23px; }
.hscroll { flex: 1; display: flex; justify-content: space-between; align-items: center; padding: 0 4px 0 4px; background: #414141; border: solid #2e2e2e; border-width: 1px 2px 2px; margin-right: -2px; }
.left, .right { width: 14px; height: 14px; background: #7d7d7d; clip-path: polygon(0 50%, 100% 0, 100% 100%); }
.right { clip-path: polygon(0 0, 100% 50%, 0 100%); }
.zb { width: 21px; height: 21px; margin-top: 1px; background: #555; border: 2px solid #2e2e2e; }
.hrow .zb:last-child { margin-right: 2px; }
.wavecol { width: 24px; display: flex; flex-direction: column; gap: 3px; padding-left: 1px; }
.wavecol .zb { margin: 0; }
.wavecol .vscroll { height: 168px; width: 23px; border: 2px solid #2e2e2e; border-left-width: 1px; }
.filerow { display: flex; margin-top: 13px; padding: 0 46px 0 22px; line-height: 34px; }
.filerow label { width: 90px; }
.filerow .field { width: 616px; height: 37px; }
.filerow .dots { margin: 1px 0 0 8px; line-height: 24px; }
.duration { margin-left: auto; color: #e0e0e0; }
.groove { width: 100%; height: 3px; margin: 8px 0 0; border: 0; background: linear-gradient(#606060 2px, #2a2a2a 2px); }

.groups { display: flex; gap: 16px; padding: 11px 0 0 2px; height: 372px; }
.grains { width: 452px; padding: 0 9px 0 11px; }
.playback { width: 289px; padding: 0 8px 0 18px; }
.filter { width: 253px; padding: 0 8px; }
.poscol { width: 288px; }
.position { padding: 0 9px 7px 7px; }
.output { flex: 1; margin-top: 1px; padding: 0 8px; }
.groups legend { margin-left: 3px; }
.playback legend { margin-left: -5px; }
.filter legend, .groups .poscol legend { margin-left: 6px; }
.groups .playback legend { margin-left: -5px; }
.groups .poscol .output legend { height: 20px; line-height: 18px; }
.prow { display: flex; justify-content: flex-end; height: 56px; line-height: 36px; }
legend + .prow { margin-top: 5px; }
.prow > label { margin-right: 10px; }
select { appearance: none; height: 37px; padding: 0 28px 0 10px; border: 2px solid var(--edge); outline: 0; color: #f2f2f2; background: url("data:image/svg+xml,%3Csvg xmlns='http://www.w3.org/2000/svg' viewBox='0 0 13 7'%3E%3Cpath d='M0 0h13L6.500 7z' fill='%239a9a9a'/%3E%3C/svg%3E") calc(100% - 12px) 50% / 13px 7px no-repeat var(--well); }
.big { height: 51px; padding-bottom: 11px; border: 0; }
.big .lfo { margin-right: 5px; }
.big .box { border-bottom-width: 2px; box-shadow: 0 11px 0 -1px #424242, 0 11px 0 0 #3e3e3e; }
.grains .num { width: 167px; }
.grains .prow > label { margin-right: 18px; }
.grains .prow > select { width: 246px; margin-right: 15px; }
.linkbtn { width: 39px; height: 39px; margin-right: 28px; }
.grains .rel > label { line-height: 40px; margin-right: 16px; }
.shape { height: 37px; }
.grains .shape > label { margin-right: 14px; line-height: 30px; }
.selwrap { display: grid; width: 246px; }
.selwrap > * { grid-area: 1 / 1; }
.selwrap select { padding-left: 45px; }
.selwrap svg { z-index: 1; margin: 8px 0 0 12px; }
.playback .num { width: 169px; }
.playback legend + .prow { height: 54px; }
.playback .gap { margin-top: 7px; }
.playback .gap + .prow { height: 55px; }
.playback .prow > label { line-height: 34px; }
.playback .root { height: 36px; margin-top: 8px; }
.playback .root + .speed { margin-top: 5px; height: 51px; }
.filter .num { width: 170px; }
.filter .type { height: 45px; line-height: 30px; }
.filter .freq { height: 59px; }
.filter .prow + .prow { line-height: 34px; }
.filter select { width: 170px; }
.position .spat { height: 43px; }
.position select { width: 268px; }
.position .num { width: 161px; }
.position .prow { line-height: 32px; }
.output .config { height: 37px; margin-top: 1px; line-height: 32px; }
.output select { width: 152px; }
.output .level { height: 36px; margin-top: 5px; line-height: 32px; }
.output .num { width: 152px; }
.meter { flex: 1; padding: 4px 10px 0 8px; background: #2b2b2b; border-radius: 5px; color: #8c8c8c; }
.meter h2 { margin: 0 0 5px; font: inherit; height: 24px; }
.mrow { display: flex; align-items: center; height: 32px; font-size: 14px; line-height: 20px; color: #9a9a9a; }
.mrow span { width: 23px; margin-right: 7px; text-align: right; }
.mrow::after { content: ""; flex: 1; height: 32px; background: linear-gradient(#484848, #484848) 0 50% / 100% 2px no-repeat, linear-gradient(#3c3c3c, #3c3c3c) 0 100% / 100% 2px no-repeat; }
.zero::after { background: linear-gradient(#6c6c6c, #6c6c6c) 0 50% / 100% 2px no-repeat, linear-gradient(#3c3c3c, #3c3c3c) 0 100% / 100% 2px no-repeat; }
.last::after { background: linear-gradient(#484848, #484848) 0 50% / 100% 2px no-repeat; }

/* grain envelope graph */
.graph { display: grid; grid-template-columns: 39px 1fr 29px; grid-template-rows: 146px 18px; margin-top: 7px; background: #333; color: #acacac; font-size: 13px; line-height: 18px; }
.graph svg { width: 100%; height: 146px; }
.gy { display: flex; flex-direction: column; justify-content: space-between; padding: 4px 0 0; font-size: 14px; text-align: right; }
.gx { grid-column: 1 / -1; display: flex; margin-top: -1px; }
.gx span { flex: 1 1 0; text-align: center; }
.gx .first { flex: 0 0 73px; text-align: right; }
.gx .lastx { flex: 0 0 76px; }
.effect .graph + .groove { margin: 9px 0 0 3px; width: calc(100% - 3px); }

/* modulator tables */
.tables { flex: 1; display: flex; margin-top: 10px; }
.modbox { width: 667px; }
.m1 { width: 38px; }
.m2 { width: 192px; }
.m3 { width: 149px; }
.m4, .m5 { width: 131px; }
.wf { display: flex; }
.wf select { flex: 1; min-width: 0; }
td select { width: 100%; display: block; }
.vgroove { width: 3px; margin: 0 13px 0 12px; background: linear-gradient(90deg, #2a2a2a 2px, #606060 2px); }
.propbox { flex: 1; position: relative; }
.p1 { width: 37px; }
.p2 { width: 48px; }
.p3 { width: 238px; }
.p4 { width: 49px; }
.p5 { width: 111px; }
.p6 { width: 132px; }
.p7 { width: 159px; }
.more { width: 46px; color: #e0e0e0; }
.curve { width: 35px; }
.activate { position: absolute; right: 200px; top: 106px; width: 164px; color: #8a8a8a; white-space: nowrap; }
.activate p { margin: 0; font-size: 15px; line-height: 22px; }
.activate small { display: block; font-size: 11px; line-height: 14px; }

.bottombar { display: flex; height: 49px; padding: 0 5px 0 16px; border-top: 2px solid #2a2a2a; }
.bottombar a { height: 45px; margin-right: 66px; color: #8f8f8f; text-decoration: none; line-height: 44px; }
.bottombar .on { color: #f4f4f4; border-bottom: 3px solid #f4f4f4; }
.foottools { display: flex; gap: 11px; margin: 17px 0 0 auto; height: 26px; }
```
